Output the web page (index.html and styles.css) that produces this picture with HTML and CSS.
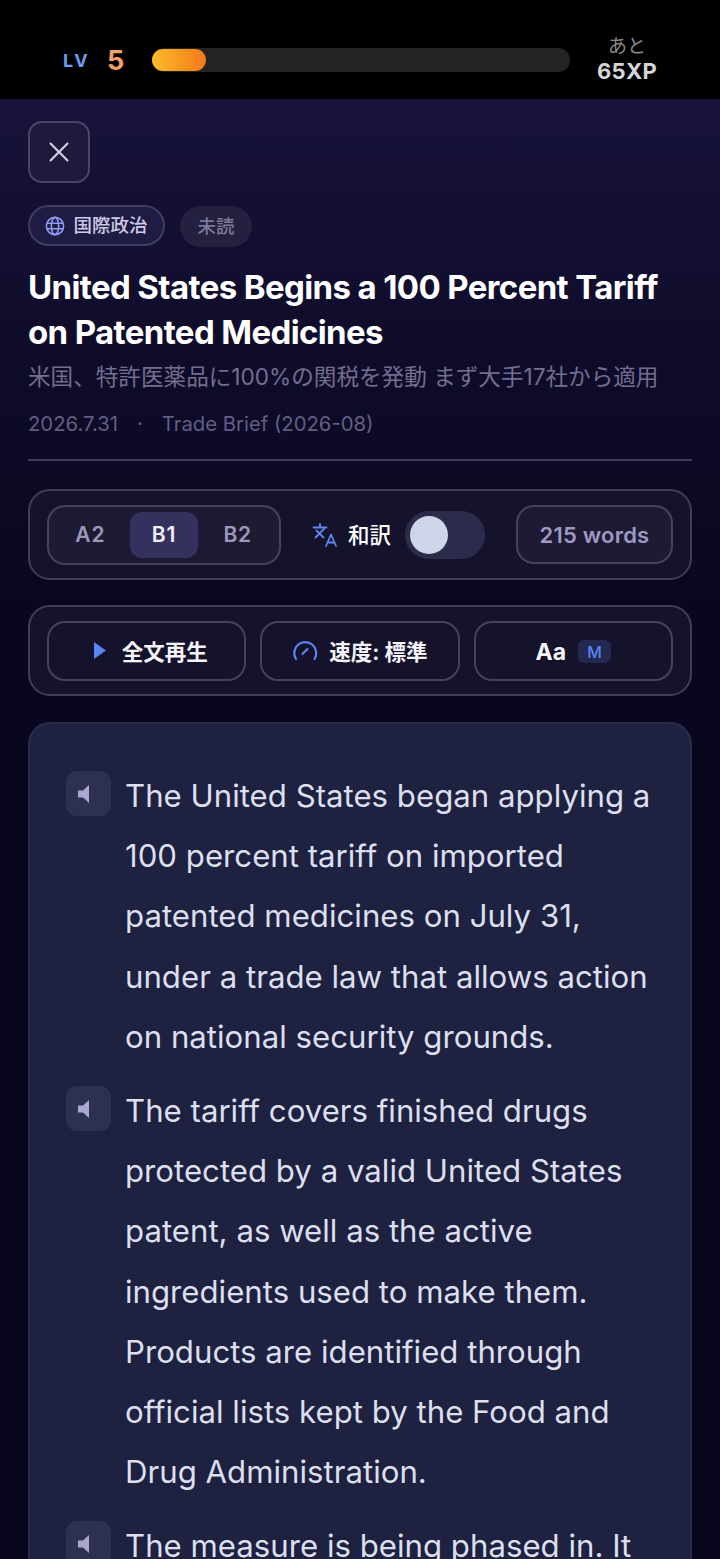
FILE: index.html
```html
<!DOCTYPE html>
<html lang="ja">
<head>
    <meta charset="UTF-8">
    <meta name="viewport" content="width=device-width, initial-scale=1.0">
    <title>Trade Brief</title>
    <link rel="stylesheet" href="styles.css">
</head>
<body>
    <header class="level-bar">
        <span class="lv-label">LV</span>
        <span class="lv-number">5</span>
        <div class="xp-track"><div class="xp-fill"></div></div>
        <div class="xp-left">
            <span class="xp-left-label">あと</span>
            <span class="xp-left-value">65XP</span>
        </div>
    </header>
    <main class="content">
        <button class="close-button" aria-label="閉じる">
            <svg width="24" height="24" viewBox="0 0 24 24" fill="none" stroke="#d8d4ea" stroke-width="2" stroke-linecap="round"><path d="M3.500 3.500 20.500 20.500M20.500 3.500 3.500 20.500"/></svg>
        </button>
        <div class="tags">
            <span class="tag tag-category">
                <svg width="20" height="20" viewBox="0 0 22 22" fill="none" stroke="#8f9cf5" stroke-width="1.700"><circle cx="11" cy="11" r="9.500"/><ellipse cx="11" cy="11" rx="4" ry="9.500"/><path d="M2 8h18M2 14h18"/></svg>
                <span class="tag-text">国際政治</span>
            </span>
            <span class="tag tag-unread"><span class="tag-text">未読</span></span>
        </div>
        <h1 class="title">United States Begins a 100 Percent Tariff on Patented Medicines</h1>
        <p class="subtitle">米国、特許医薬品に100%の関税を発動 まず大手17社から適用</p>
        <p class="meta"><span>2026.7.31</span><span class="meta-dot">·</span><span>Trade Brief (2026-08)</span></p>
        <hr class="divider">

        <section class="panel">
            <div class="levels">
                <span class="level">A2</span>
                <span class="level level-active">B1</span>
                <span class="level">B2</span>
            </div>
            <div class="translate">
                <svg width="26" height="26" viewBox="0 0 26 26" fill="none" stroke="#5f86f2" stroke-width="1.800" stroke-linecap="round" stroke-linejoin="round"><path d="M1.500 5.500h13M8 2v3.500M3.500 15.500 12 7M4.500 8.500l7 7M14 24l5-11.500L24 24M15.700 20.500h6.600"/></svg>
                <span class="translate-label">和訳</span>
                <span class="toggle"><span class="toggle-knob"></span></span>
            </div>
            <span class="word-count">215 words</span>
        </section>

        <section class="panel panel-actions">
            <button class="action action-play">
                <svg width="14" height="17" viewBox="0 0 14 17" fill="#5b84f5"><path d="M1 0 13 8.500 1 17z"/></svg>
                <span>全文再生</span>
            </button>
            <button class="action action-speed">
                <svg width="26" height="22" viewBox="0 0 26 22" fill="none" stroke="#5b84f5" stroke-width="2.200" stroke-linecap="round"><path d="M4 19A11 11 0 1 1 22.500 19M10.500 14 15.500 9"/></svg>
                <span>速度: 標準</span>
            </button>
            <button class="action action-size">
                <span class="action-latin">Aa</span>
                <span class="size-badge">M</span>
            </button>
        </section>

        <article class="card">
            <div class="para">
                <span class="speak"><svg width="12" height="18" viewBox="0 0 12 18" fill="#aaa8d0"><path d="M11 0V18L5 12.500H0V5.500H5z"/></svg></span>
                <p>The United States began applying a 100 percent tariff on imported patented medicines on July 31, under a trade law that allows action on national security grounds.</p>
            </div>
            <div class="para">
                <span class="speak"><svg width="12" height="18" viewBox="0 0 12 18" fill="#aaa8d0"><path d="M11 0V18L5 12.500H0V5.500H5z"/></svg></span>
                <p>The tariff covers finished drugs protected by a valid United States patent, as well as the active ingredients used to make them. Products are identified through official lists kept by the Food and Drug Administration.</p>
            </div>
            <div class="para">
                <span class="speak"><svg width="12" height="18" viewBox="0 0 12 18" fill="#aaa8d0"><path d="M11 0V18L5 12.500H0V5.500H5z"/></svg></span>
                <p>The measure is being phased in. It</p>
            </div>
        </article>
    </main>
</body>
</html>
```

FILE: styles.css
```css
html, body {
    margin: 0;
    height: 1559px;
    overflow: hidden;
}
body {
    font-family: Inter, "Noto Sans CJK JP", sans-serif;
    background: linear-gradient(180deg, #17133a 99px, #0f0c2a 350px, #090720 600px, #090720 100%);
    color: #fff;
}
button {
    font-family: inherit;
    color: inherit;
    cursor: pointer;
}

.level-bar {
    height: 99px;
    box-sizing: border-box;
    background: #000;
    display: flex;
    align-items: center;
    padding: 21px 62px 0 63px;
}
.lv-label {
    font-size: 18px;
    font-weight: 700;
    letter-spacing: 2.500px;
    color: #6c9cf0;
    width: 44px;
}
.lv-number {
    font-size: 27px;
    font-weight: 700;
    color: #f2a169;
    width: 45px;
}
.xp-track {
    flex: 1;
    height: 24px;
    border-radius: 12px;
    background: #232323;
}
.xp-fill {
    width: 54px;
    height: 22px;
    margin-top: 1px;
    border-radius: 11px;
    background: linear-gradient(90deg, #fdbb2a, #f5791a);
}
.xp-left {
    width: 62px;
    margin: 0 0 2px 26px;
    display: flex;
    flex-direction: column;
    align-items: center;
}
.xp-left-label {
    font-size: 19px;
    line-height: 24px;
    color: #8a8a8a;
}
.xp-left-value {
    font-size: 22px;
    line-height: 25px;
    font-weight: 700;
    letter-spacing: 0.300px;
    color: #d6d6d6;
}

.content {
    padding: 22px 28px 0;
}
.close-button {
    display: flex;
    align-items: center;
    justify-content: center;
    width: 62px;
    height: 62px;
    padding: 0;
    border: 2px solid #4a4568;
    border-radius: 14px;
    background: #1d1a3c;
}
.tags {
    display: flex;
    gap: 15px;
    margin-top: 22px;
}
.tag {
    display: flex;
    align-items: center;
    justify-content: center;
    height: 41px;
    box-sizing: border-box;
    border-radius: 21px;
    font-size: 18.500px;
    font-weight: 500;
}
.tag-text {
    margin-top: -3px;
}
.tag-category {
    gap: 8px;
    width: 137px;
    border: 2px solid #413d64;
    background: #1f1c44;
    color: #cfcbe6;
}
.tag-unread {
    width: 72px;
    margin-top: 1px;
    background: #242040;
    color: #7f7a9a;
}
.title {
    margin: 18px 0 0;
    font-size: 33px;
    line-height: 45px;
    font-weight: 700;
    letter-spacing: -0.620px;
}
.subtitle {
    margin: 5px 0 0;
    font-size: 22.600px;
    line-height: 34px;
    color: #736e90;
}
.meta {
    margin: 17px 0 0;
    display: flex;
    font-size: 20.300px;
    line-height: 26px;
    color: #625e84;
}
.meta-dot {
    margin: 0 19px;
}
.divider {
    margin: 22px 0 0;
    border: 0;
    height: 2px;
    background: #403d58;
}

.panel {
    display: flex;
    align-items: center;
    justify-content: space-between;
    height: 91px;
    box-sizing: border-box;
    margin-top: 28px;
    padding: 0 17px;
    border: 2px solid #403d58;
    border-radius: 22px;
    background: #15122c;
}
.levels {
    display: flex;
    align-items: center;
    gap: 5px;
    width: 234px;
    height: 60px;
    box-sizing: border-box;
    padding: 0 7px;
    border: 2px solid #45425e;
    border-radius: 18px;
    background: #1e1a33;
}
.level {
    flex: 1;
    height: 46px;
    display: flex;
    align-items: center;
    justify-content: center;
    border-radius: 12px;
    font-size: 21px;
    font-weight: 600;
    letter-spacing: 0.800px;
    color: #9c97bd;
}
.level-active {
    background: #34315f;
    color: #f0eefa;
}
.translate {
    display: flex;
    align-items: center;
}
.translate-label {
    margin: -2px 0 0 10px;
    font-size: 21.500px;
    font-weight: 500;
}
.toggle {
    width: 80px;
    height: 48px;
    margin-left: 14px;
    box-sizing: border-box;
    padding: 5px;
    border-radius: 24px;
    background: #2d2b4c;
}
.toggle-knob {
    display: block;
    width: 38px;
    height: 38px;
    border-radius: 50%;
    background: #d0d6ea;
}
.word-count {
    display: flex;
    align-items: center;
    justify-content: center;
    width: 157px;
    height: 59px;
    box-sizing: border-box;
    border: 2px solid #45425e;
    border-radius: 18px;
    background: #1e1a33;
    font-size: 22px;
    font-weight: 600;
    letter-spacing: 0.200px;
    color: #9e99c4;
}
.panel-actions {
    display: grid;
    grid-template-columns: 1fr 1fr 1fr;
    margin-top: 25px;
    gap: 14px;
}
.action {
    height: 60px;
    display: flex;
    align-items: center;
    justify-content: center;
    gap: 15px;
    padding: 0;
    border: 2px solid #45425e;
    border-radius: 18px;
    background: #15122c;
    font-size: 21.500px;
    font-weight: 700;
    color: #f5f5fb;
}
.action-play {
    padding-left: 7px;
}
.action-speed {
    gap: 11px;
}
.action-size {
    gap: 12px;
    padding-top: 2px;
}
.action-latin {
    font-size: 23px;
    font-weight: 700;
}
.size-badge {
    display: flex;
    align-items: center;
    justify-content: center;
    width: 33px;
    height: 23px;
    border-radius: 6px;
    background: #222850;
    font-size: 16px;
    font-weight: 500;
    color: #5b84f5;
}

.card {
    margin-top: 26px;
    height: 1000px;
    box-sizing: border-box;
    padding: 42px 36px 0;
    border: 2px solid #2a2c4c;
    border-radius: 22px;
    background: #1e2140;
}
.para {
    display: flex;
    gap: 14px;
    margin-bottom: 14px;
}
.para p {
    margin: 0;
    flex: 1;
    font-size: 31.200px;
    line-height: 60.200px;
    color: #dcdfee;
}
.speak {
    flex: none;
    display: flex;
    align-items: center;
    padding-left: 12px;
    box-sizing: border-box;
    width: 45px;
    height: 45px;
    margin-top: 5px;
    border-radius: 11px;
    background: #2e3050;
}
```
